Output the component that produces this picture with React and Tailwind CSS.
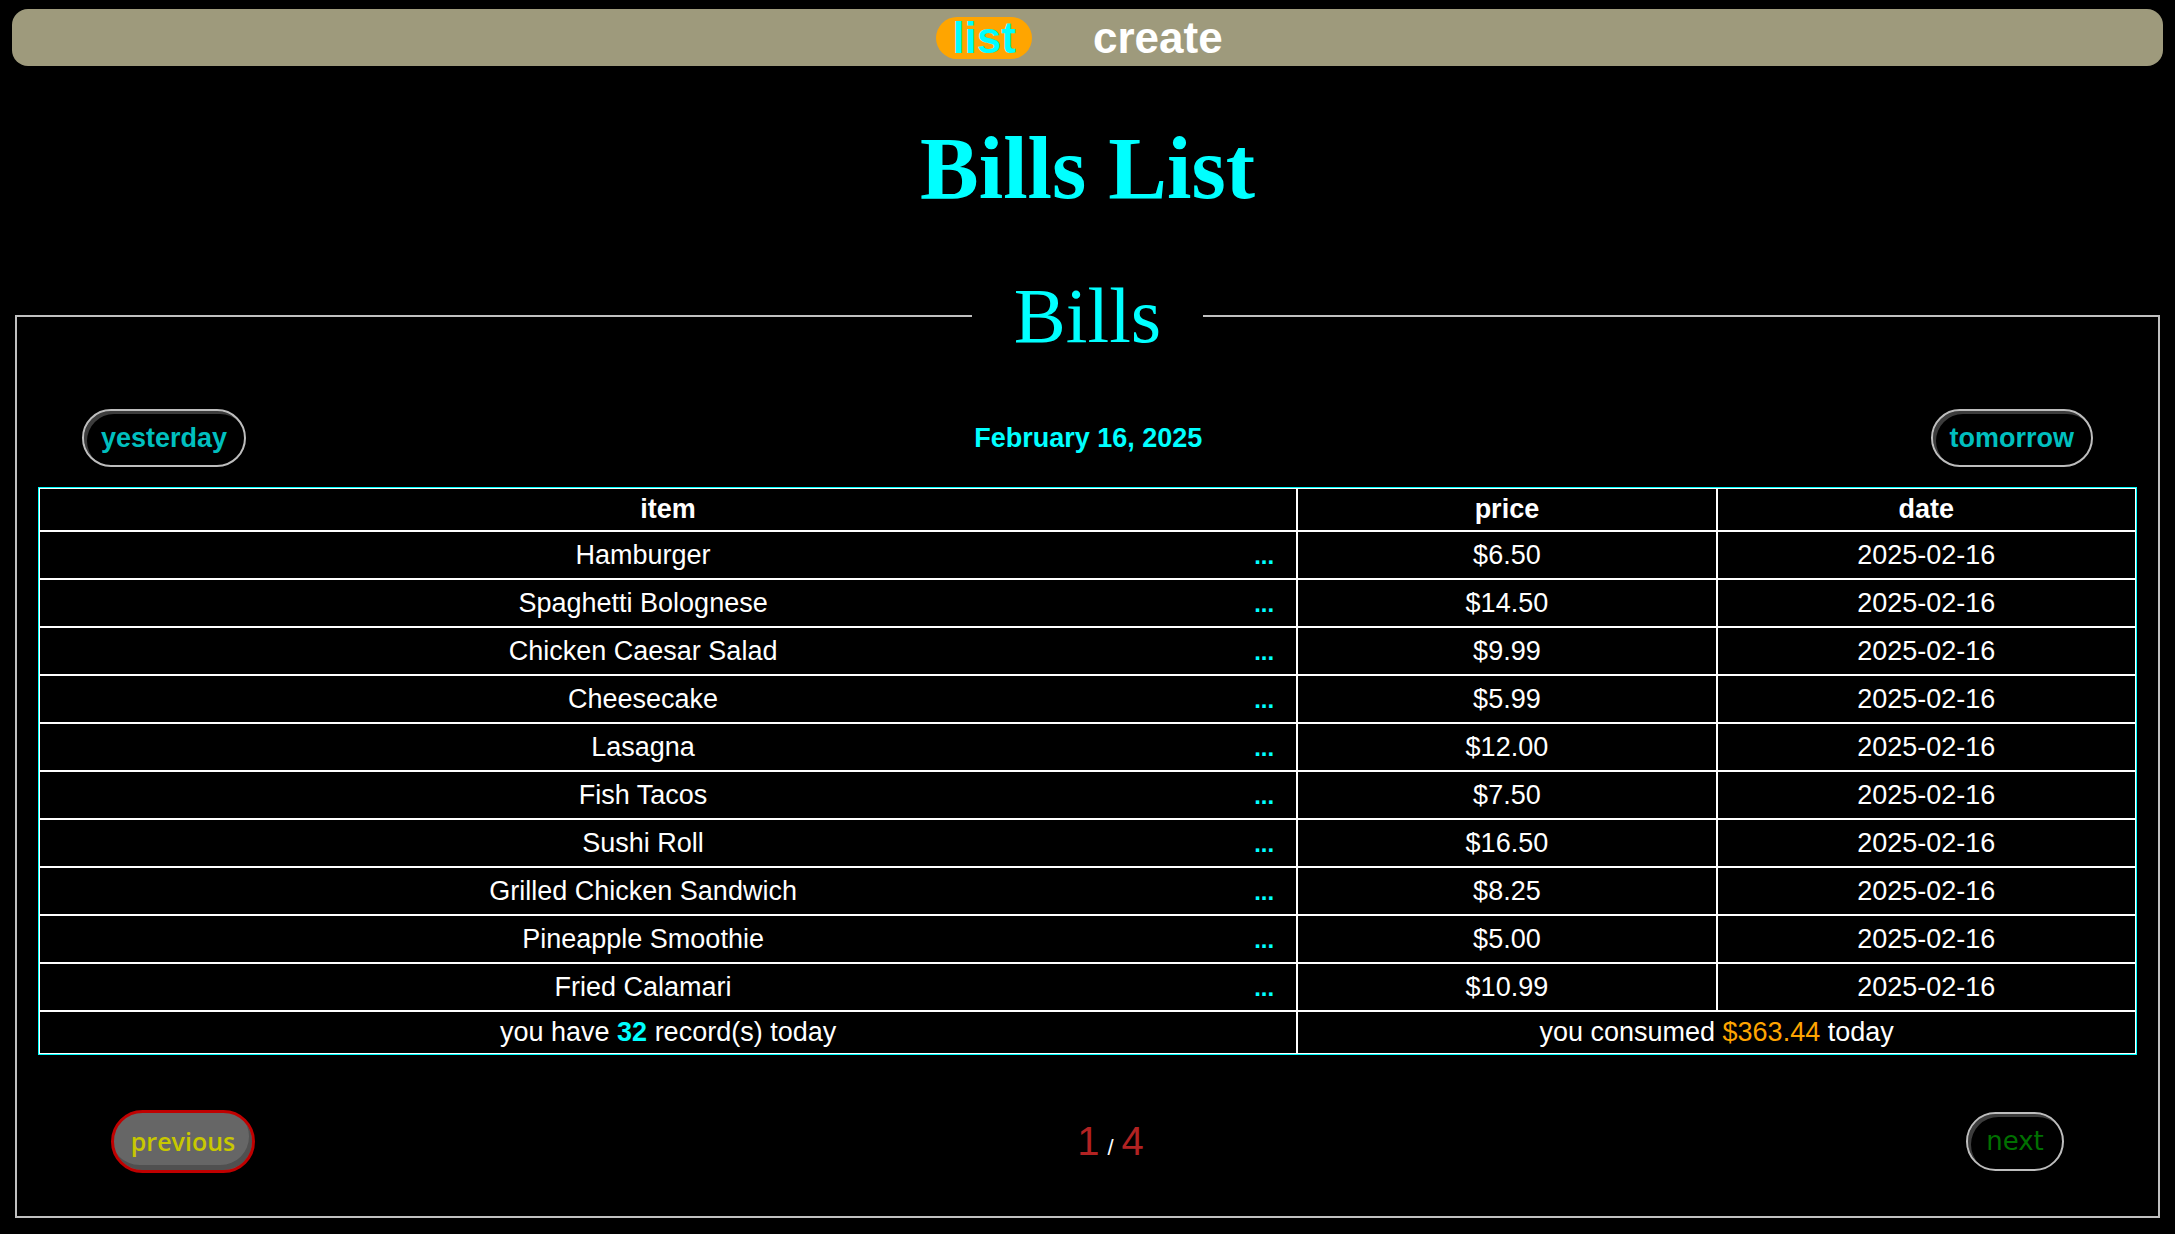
const bills = [
  { name: 'Hamburger', price: '$6.50' },
  { name: 'Spaghetti Bolognese', price: '$14.50' },
  { name: 'Chicken Caesar Salad', price: '$9.99' },
  { name: 'Cheesecake', price: '$5.99' },
  { name: 'Lasagna', price: '$12.00' },
  { name: 'Fish Tacos', price: '$7.50' },
  { name: 'Sushi Roll', price: '$16.50' },
  { name: 'Grilled Chicken Sandwich', price: '$8.25' },
  { name: 'Pineapple Smoothie', price: '$5.00' },
  { name: 'Fried Calamari', price: '$10.99' },
]

const sans = "font-['Liberation_Sans',Arial,sans-serif]"

function NavBar() {
  return (
    <div className="px-[12px] pt-[9px]">
      <nav className={`flex h-[57px] items-center justify-center gap-[45px] rounded-[16px] bg-[#9e9a7c] text-[44px] font-bold ${sans}`}>
        <a className="flex h-[42px] items-center rounded-full bg-[#ffa500] px-4 text-[#00ffff]">list</a>
        <a className="flex h-[42px] items-center px-4 text-white">create</a>
      </nav>
    </div>
  )
}

function DayButton({ children }) {
  return (
    <button className="h-[58px] rounded-full border-2 border-[#bdbdbd] bg-black px-[17px] text-[27px] font-bold text-[#00bfbf] shadow-[inset_3px_3px_0_#3c3c3c]">
      {children}
    </button>
  )
}

function BillRow({ bill }) {
  return (
    <tr>
      <td className="h-[48px] border border-white p-0">
        <div className="flex items-baseline">
          <span className="flex-1 text-center">{bill.name}</span>
          <a className="ml-[8px] mr-[22px] text-[24px] font-bold text-[#00ffff]">...</a>
        </div>
      </td>
      <td className="h-[48px] border border-white p-0 text-center">{bill.price}</td>
      <td className="h-[48px] border border-white p-0 text-center">2025-02-16</td>
    </tr>
  )
}

export default function App() {
  return (
    <div className={`min-h-screen bg-black pb-[16px] text-white ${sans}`}>
      <NavBar />

      <h1 className="mt-[52px] text-center font-['Liberation_Serif','Times_New_Roman',serif] text-[88px] font-bold leading-[1.15] text-[#00ffff]">
        Bills List
      </h1>

      <fieldset className="mx-[15px] mt-[52px] border-2 border-[#c0c0c0] px-[21px] pb-[43px]">
        <legend className="mx-auto px-[42px] font-['Liberation_Serif','Times_New_Roman',serif] text-[78px] leading-[1.15] text-[#00ffff]">
          Bills
        </legend>

        <div className="mt-[48px] flex items-center justify-between px-[44px]">
          <DayButton>yesterday</DayButton>
          <span className="text-[27px] font-bold text-[#00ffff]">February 16, 2025</span>
          <DayButton>tomorrow</DayButton>
        </div>

        <table className="mt-[20px] w-full border-separate border-spacing-0 border border-[#00ffff] text-[27px]">
          <thead>
            <tr>
              <th className="h-[43px] w-[60%] border border-white p-0 font-bold">item</th>
              <th className="h-[43px] w-[20%] border border-white p-0 font-bold">price</th>
              <th className="h-[43px] w-[20%] border border-white p-0 font-bold">date</th>
            </tr>
          </thead>
          <tbody>
            {bills.map((b) => (
              <BillRow key={b.name} bill={b} />
            ))}
            <tr>
              <td className="h-[43px] border border-white p-0 text-center">
                you have <span className="font-bold text-[#00ffff]">32</span> record(s) today
              </td>
              <td colSpan={2} className="h-[43px] border border-white p-0 text-center">
                you consumed <span className="text-[#ffa500]">$363.44</span> today
              </td>
            </tr>
          </tbody>
        </table>

        <div className="mt-[55px] flex items-center justify-between px-[73px]">
          <button className="h-[63px] w-[144px] rounded-full border-[3px] border-[#c00000] bg-[#666666] font-['Open_Sans',sans-serif] text-[25px] font-semibold text-[#c8c800] shadow-[inset_-3px_-5px_0_#505050]">
            previous
          </button>
          <div className="flex items-baseline gap-[8px]">
            <span className="text-[40px] text-[#b22222]">1</span>
            <span className="text-[22px] text-white">/</span>
            <span className="text-[40px] text-[#b22222]">4</span>
          </div>
          <button className="h-[59px] w-[98px] rounded-full border-2 border-[#bdbdbd] bg-black font-['DejaVu_Sans',sans-serif] text-[26px] text-[#007000] shadow-[inset_3px_3px_0_#3c3c3c]">
            next
          </button>
        </div>
      </fieldset>
    </div>
  )
}
